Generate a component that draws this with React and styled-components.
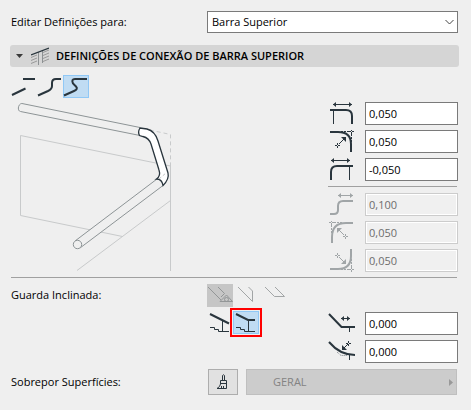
import React from 'react';
import styled, { createGlobalStyle, css } from 'styled-components';

const GlobalStyle = createGlobalStyle`
  * {
    box-sizing: border-box;
  }

  body {
    margin: 0;
    background: #efefef;
    color: #000;
    font-family: 'Open Sans', 'Noto Sans', sans-serif;
    font-size: 11px;
    line-height: 16px;
  }

  button, input, select {
    font: inherit;
    color: inherit;
    margin: 0;
    border-radius: 0;
  }
`;

const Panel = styled.main`
  padding: 11px 12px 14px 10px;
`;

const TargetRow = styled.div`
  display: grid;
  grid-template-columns: 196px 1fr;
  align-items: center;
  padding: 0 1px;
  margin-bottom: 12px;
`;

const SelectWrap = styled.div`
  display: grid;
  align-items: center;

  > * {
    grid-area: 1 / 1;
  }

  svg {
    justify-self: end;
    margin-right: 4px;
    pointer-events: none;
  }
`;

const Select = styled.select`
  appearance: none;
  width: 100%;
  height: 22px;
  padding: 0 20px 0 4px;
  border: 1px solid #7a7a7a;
  background: #fff;
`;

const SectionHeader = styled.button`
  display: flex;
  align-items: center;
  width: 100%;
  height: 22px;
  padding: 0 6px;
  border: 0;
  border-radius: 3px;
  background: #d5d5d5;
  font-weight: 600;
  text-align: left;
  white-space: nowrap;
`;

const HeaderIcon = styled.svg`
  flex: none;
  margin: 0 7px 0 8px;
`;

const Connection = styled.section`
  display: flex;
  justify-content: space-between;
  align-items: flex-end;
  padding: 8px 1px 5px;
`;

const Toolbar = styled.div`
  display: flex;
`;

const ToolButton = styled.button`
  display: block;
  width: 26px;
  height: 23px;
  padding: 0;
  border: 0;
  background: none;
  color: #29353d;

  svg {
    display: block;
    overflow: visible;
  }

  &:disabled {
    color: #a2a5a6;
  }

  ${({ $pressed }) => $pressed && css`
    background: #c6c6c6;

    &:disabled {
      color: #939697;
    }
  `}

  ${({ $selected }) => $selected && css`
    background: #c0dcf3;
    box-shadow: inset 0 0 0 1px #90c8f6;
  `}

  ${({ $marked }) => $marked && css`
    outline: 2px solid #f00;
    outline-offset: 1px;
  `}
`;

const Diagram = styled.svg`
  display: block;
  margin-top: 2px;
`;

const Fields = styled.div`
  display: flex;
  flex-direction: column;
  gap: 5px;
  width: 130px;
`;

const Field = styled.label`
  display: flex;
  justify-content: space-between;
  color: ${({ $muted }) => ($muted ? '#a0a5a7' : '#29353d')};
`;

const NumberInput = styled.input`
  width: 93px;
  height: 23px;
  padding: 0 3px;
  border: 1px solid #7a7a7a;
  background: #fff;
  color: #000;

  &:disabled {
    border-color: #ccc;
    background: #f0f0f0;
    box-shadow: inset 0 0 0 1px #fff;
    color: #6d6d6d;
  }
`;

const Rule = styled.hr`
  width: ${({ $short }) => ($short ? '129px' : 'auto')};
  height: 1px;
  margin: ${({ $short }) => ($short ? '0 0 1px' : '0 2px 0 1px')};
  border: 0;
  background: #a0a0a0;
`;

const Slope = styled.section`
  display: grid;
  grid-template-columns: 196px 1fr 130px;
  align-items: start;
  padding: 6px 1px;

  ${Fields} {
    padding-top: 28px;
  }
`;

const SlopeLabel = styled.span`
  padding-top: 3px;
`;

const SlopeTools = styled.div`
  display: flex;
  flex-direction: column;
  gap: 4px;
`;

const SurfaceRow = styled.div`
  display: grid;
  grid-template-columns: 189px 30px 1fr;
  column-gap: 8px;
  align-items: center;
  padding: 0 2px 0 1px;
`;

const BrushButton = styled.button`
  height: 26px;
  padding: 0;
  border: 1px solid #adadad;
  background: #e1e1e1;

  svg {
    display: block;
    margin: auto;
  }
`;

const SurfaceButton = styled.button`
  display: flex;
  align-items: center;
  justify-content: space-between;
  height: 26px;
  padding: 0 3px 0 26px;
  border: 1px solid #bfbfbf;
  background: #ccc;
  color: #838383;
`;

const Icon = ({ children, width = 26, height = 23 }) => (
  <svg
    width={width}
    height={height}
    viewBox={`0 0 ${width} ${height}`}
    fill="none"
    stroke="currentColor"
    aria-hidden="true"
  >
    {children}
  </svg>
);

// horizontal double-headed dimension arrow
const Span = ({ from, to, y = 2.5 }) => (
  <g>
    <path d={`M${from} ${y}H${to}`} />
    <path
      d={`M${from} ${y}l3 -2.5v5zM${to} ${y}l-3 -2.5v5z`}
      fill="currentColor"
      stroke="none"
    />
  </g>
);

const Cross = ({ x, y }) => (
  <path d={`M${x - 2.5} ${y}h2M${x + 0.5} ${y}h2M${x} ${y - 2.5}v2M${x} ${y + 0.5}v2`} />
);

const fieldIcons = {
  endLength: (
    <>
      <Span from={5} to={24} />
      <path d="M2 8H18Q24 8 24 14V22" strokeWidth="2" />
      <path d="M5.5 8V22" />
    </>
  ),
  endRadius: (
    <>
      <path d="M2 2H10Q23 2 23 14V22" strokeWidth="2" />
      <path d="M13 1.5H21M23.5 4V12" strokeDasharray="2 1" />
      <Cross x={23.5} y={1.5} />
      <Cross x={9.5} y={15.5} />
      <path d="M11 14L16 9" />
      <path d="M18 7V12L13 7Z" fill="currentColor" stroke="none" />
    </>
  ),
  startLength: (
    <>
      <Span from={3} to={22} />
      <path d="M25 8H9Q3 8 3 14V22" strokeWidth="2" />
      <path d="M21.5 8V22" />
    </>
  ),
  offset: (
    <>
      <Span from={10} to={25} />
      <path d="M2 21H6Q10 21 10 17V13Q10 8 15 8H25" strokeWidth="2" />
    </>
  ),
  upperRadius: (
    <>
      <path d="M25 2H18Q4 2 4 16V22" strokeWidth="2" />
      <path d="M6 1.5H14M3.5 4V12" strokeDasharray="2 1" />
      <Cross x={3.5} y={1.5} />
      <Cross x={17.5} y={15.5} />
      <path d="M16 14L11 9" />
      <path d="M9 7V12L14 7Z" fill="currentColor" stroke="none" />
    </>
  ),
  lowerRadius: (
    <>
      <path d="M2 20H10Q23 20 23 7V0" strokeWidth="2" />
      <path d="M13 20.5H21M23.5 10V18" strokeDasharray="2 1" />
      <Cross x={23.5} y={20.5} />
      <Cross x={9.5} y={6.5} />
      <path d="M11 8L16 13" />
      <path d="M18 15V10L13 15Z" fill="currentColor" stroke="none" />
    </>
  ),
  slopeLength: (
    <>
      <path d="M1 2L13.5 15H27" strokeWidth="2" />
      <path d="M21.5 15V20" />
      <Span from={13} to={22} y={6.5} />
    </>
  ),
  slopeRadius: (
    <>
      <path d="M1 2Q12 15 27 15" strokeWidth="2" />
      <path d="M21.5 15V20" />
      <path d="M9 12L13 15.5H19" strokeDasharray="1 1" opacity="0.6" />
      <Cross x={20.5} y={3.5} />
      <path d="M20 4L16 8" />
      <path d="M14 10V5L19 10Z" fill="currentColor" stroke="none" />
    </>
  ),
};

const NumberField = ({ icon, label, value, disabled }) => (
  <Field $muted={disabled}>
    <Icon width={28}>{fieldIcons[icon]}</Icon>
    <NumberInput type="text" aria-label={label} defaultValue={value} disabled={disabled} />
  </Field>
);

const ConnectionDiagram = () => (
  <Diagram width="165" height="172" viewBox="0 0 165 172" fill="none" aria-hidden="true">
    {/* infill panels */}
    <g stroke="#c8cacb">
      <path d="M159.5 66L9.5 35.5V115.5L111.5 136.5" />
      <path d="M66 170.5L159.5 100.5" />
      <path d="M159.5 66V171" />
      <path d="M132 28.5L159.5 34.5V66" strokeDasharray="4 3" />
    </g>
    {/* rails */}
    <g stroke="#8d9496" fill="#efefef">
      <path d="M129 27.5L11 3.5C7 3.5 6 11 9.5 11.5L129 35.5" />
      <path d="M146 79L64 141L69 148L152 85.5Z" stroke="none" />
      <path d="M146 79L64 141M152 85.5L69 148" />
      <circle cx="66.5" cy="144.5" r="4.2" />
    </g>
    {/* connecting piece */}
    <path
      d="M129 28L136 29Q144 31 147 41L157 73Q158.5 79 152 85.5Q151 79 145.5 79Q150 76 148 70L140 44Q138 38 132 36.5L128.5 35.5Q126.5 32 129 28Z"
      fill="#fff"
      stroke="#29353d"
      strokeWidth="1.3"
    />
    <path d="M148 79L155 73" stroke="#c2c5c6" strokeDasharray="3 2" />
  </Diagram>
);

const Stairs = () => <path d="M3 16.5H7.5V18.5H11.5V20.5H22M15.5 9V20" />;

const App = () => {
  return (
    <>
      <GlobalStyle />
      <Panel>
        <TargetRow>
          <label htmlFor="target">Editar Definições para:</label>
          <SelectWrap>
            <Select id="target" defaultValue="top">
              <option value="top">Barra Superior</option>
            </Select>
            <svg width="9" height="6" viewBox="0 0 9 6" fill="none" stroke="#444">
              <path d="M0.5 1L4.5 5L8.5 1" />
            </svg>
          </SelectWrap>
        </TargetRow>

        <SectionHeader type="button" aria-expanded="true">
          <svg width="7" height="4" viewBox="0 0 7 4" fill="#3a3a3a" aria-hidden="true">
            <path d="M0 0H7L3.5 4Z" />
          </svg>
          <HeaderIcon width="18" height="19" viewBox="0 0 18 19" fill="none" aria-hidden="true">
            <path
              d="M0 10.5L6 8M0 13.5L6 11M0 16.5L6 14M12 5.5L18 3M12 8.5L18 6M12 11.5L18 9M12 14.5L18 12"
              stroke="#999"
            />
            <path d="M7.5 5V18M11.5 4V16" stroke="#8d9193" />
            <path d="M0 8L18 1" stroke="#29353d" strokeWidth="1.3" />
          </HeaderIcon>
          DEFINIÇÕES DE CONEXÃO DE BARRA SUPERIOR
        </SectionHeader>

        <Connection>
          <div>
            <Toolbar>
              <ToolButton type="button" aria-label="Sem conexão">
                <Icon><path d="M1 20L14.5 13.5M12 4H24" strokeWidth="2" /></Icon>
              </ToolButton>
              <ToolButton type="button" aria-label="Conexão vertical">
                <Icon><path d="M1 20.5L11 16Q15 14 15 11V8Q15 4 19 4H24" strokeWidth="2" /></Icon>
              </ToolButton>
              <ToolButton type="button" aria-label="Conexão direta" aria-pressed="true" $selected>
                <Icon>
                  <path d="M1 20.5L11 16Q15.5 14 13 11.5L10 8.5Q8 4 12 4H24" strokeWidth="2" />
                </Icon>
              </ToolButton>
            </Toolbar>
            <ConnectionDiagram />
          </div>
          <Fields>
            <NumberField icon="endLength" label="Comprimento final" value="0,050" />
            <NumberField icon="endRadius" label="Raio final" value="0,050" />
            <NumberField icon="startLength" label="Comprimento inicial" value="-0,050" />
            <Rule $short />
            <NumberField icon="offset" label="Deslocamento" value="0,100" disabled />
            <NumberField icon="upperRadius" label="Raio superior" value="0,050" disabled />
            <NumberField icon="lowerRadius" label="Raio inferior" value="0,050" disabled />
          </Fields>
        </Connection>

        <Rule />

        <Slope>
          <SlopeLabel>Guarda Inclinada:</SlopeLabel>
          <SlopeTools>
            <Toolbar>
              <ToolButton type="button" aria-label="Inclinação automática" disabled $pressed>
                <Icon>
                  <path d="M1 3L14 16M11 3L17.5 9.5L14 13" />
                  <path d="M13 17.5L19.5 11L25.5 17.5Z" />
                  <circle cx="19.5" cy="15.5" r="2" />
                </Icon>
              </ToolButton>
              <ToolButton type="button" aria-label="Corte vertical" disabled>
                <Icon><path d="M5 3L19.5 17.5V7L15.5 3" /></Icon>
              </ToolButton>
              <ToolButton type="button" aria-label="Corte horizontal" disabled>
                <Icon><path d="M6 3L15.5 12.5H25.5L16 3" /></Icon>
              </ToolButton>
            </Toolbar>
            <Toolbar>
              <ToolButton type="button" aria-label="Guarda inclinada">
                <Icon>
                  <path d="M3 3L22 12.5" strokeWidth="2" />
                  <Stairs />
                </Icon>
              </ToolButton>
              <ToolButton type="button" aria-label="Guarda nivelada" aria-pressed="true" $selected $marked>
                <Icon>
                  <path d="M3 3L15 9H22" strokeWidth="2" />
                  <Stairs />
                </Icon>
              </ToolButton>
            </Toolbar>
          </SlopeTools>
          <Fields>
            <NumberField icon="slopeLength" label="Comprimento da inclinação" value="0,000" />
            <NumberField icon="slopeRadius" label="Raio da inclinação" value="0,000" />
          </Fields>
        </Slope>

        <SurfaceRow>
          <span>Sobrepor Superfícies:</span>
          <BrushButton type="button" aria-label="Sobrepor superfícies">
            <Icon width={14} height={16}>
              <g stroke="#29353d">
                <path d="M6.5 6V1.5Q7.5 0 8.5 1.5V6" />
                <path d="M4.5 10V6.5H10.5V10M4 9.5H11" />
                <path d="M4.5 10L3.5 12.5L1 14.5H10.5V10" />
                <path d="M5.5 14V12M7.5 14V12" />
              </g>
            </Icon>
          </BrushButton>
          <SurfaceButton type="button" disabled>
            GERAL
            <svg width="4" height="7" viewBox="0 0 4 7" fill="#999" aria-hidden="true">
              <path d="M0 0L4 3.5L0 7Z" />
            </svg>
          </SurfaceButton>
        </SurfaceRow>
      </Panel>
    </>
  );
};

export default App;
